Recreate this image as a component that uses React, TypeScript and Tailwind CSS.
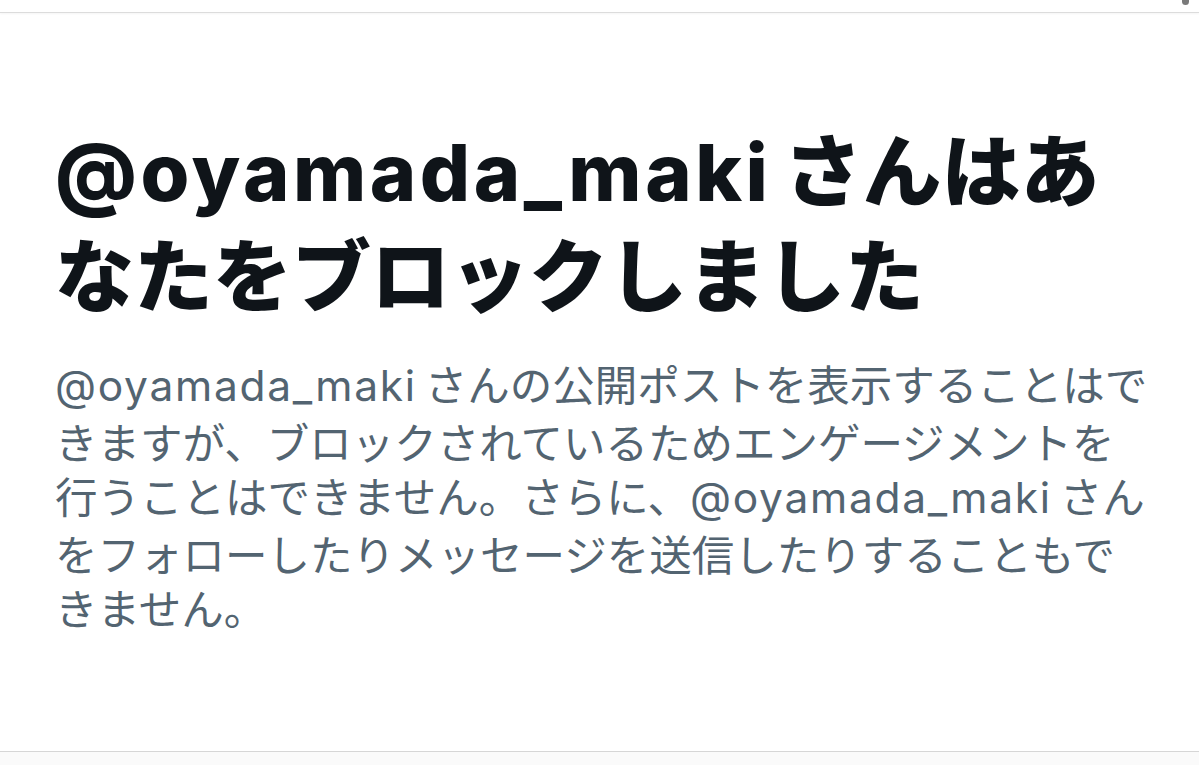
export default function App() {
  const latin = '[font-family:Inter,"Noto_Sans_CJK_JP",sans-serif]'
  return (
    <div className="flex h-[765px] w-[1199px] flex-col overflow-hidden bg-white [font-family:'Noto_Sans_CJK_JP',sans-serif]">
      <div className="relative h-[12px] shrink-0">
        <span className="absolute right-[10px] top-[-3px] h-[8px] w-[7px] rounded-full bg-[#7a7a7a]" />
      </div>
      <div className="h-px shrink-0 bg-[#dcdcdc] shadow-[0_1px_2px_rgba(0,0,0,0.06)]" />

      <main className="flex flex-1 flex-col px-[55px] pt-[104px]">
        <h1 className="whitespace-nowrap text-[79px] font-extrabold leading-[100px] text-[#0f1419]">
          <span className={`${latin} tracking-[0.045em]`}>@oyamada_maki</span>
          <span className="ml-[12px]">さんはあ</span>
          <br />
          なたをブロックしました
        </h1>

        <p className="mt-[34px] whitespace-nowrap text-[42.5px] leading-[54.5px] text-[#536471]">
          <span className={`${latin} tracking-[0.04em]`}>@oyamada_maki</span>
          <span className="ml-[8px]">さんの公開ポストを表示することはで</span>
          <br />
          きますが、ブロックされているためエンゲージメントを
          <br />
          行うことはできません。さらに、
          <span className={`${latin} tracking-[0.04em]`}>@oyamada_maki</span>
          <span className="ml-[8px]">さん</span>
          <br />
          をフォローしたりメッセージを送信したりすることもで
          <br />
          きません。
        </p>
      </main>

      <div className="h-px shrink-0 bg-[#d6d6d6]" />
      <div className="h-[13px] shrink-0 bg-[#fafafa]" />
    </div>
  )
}
